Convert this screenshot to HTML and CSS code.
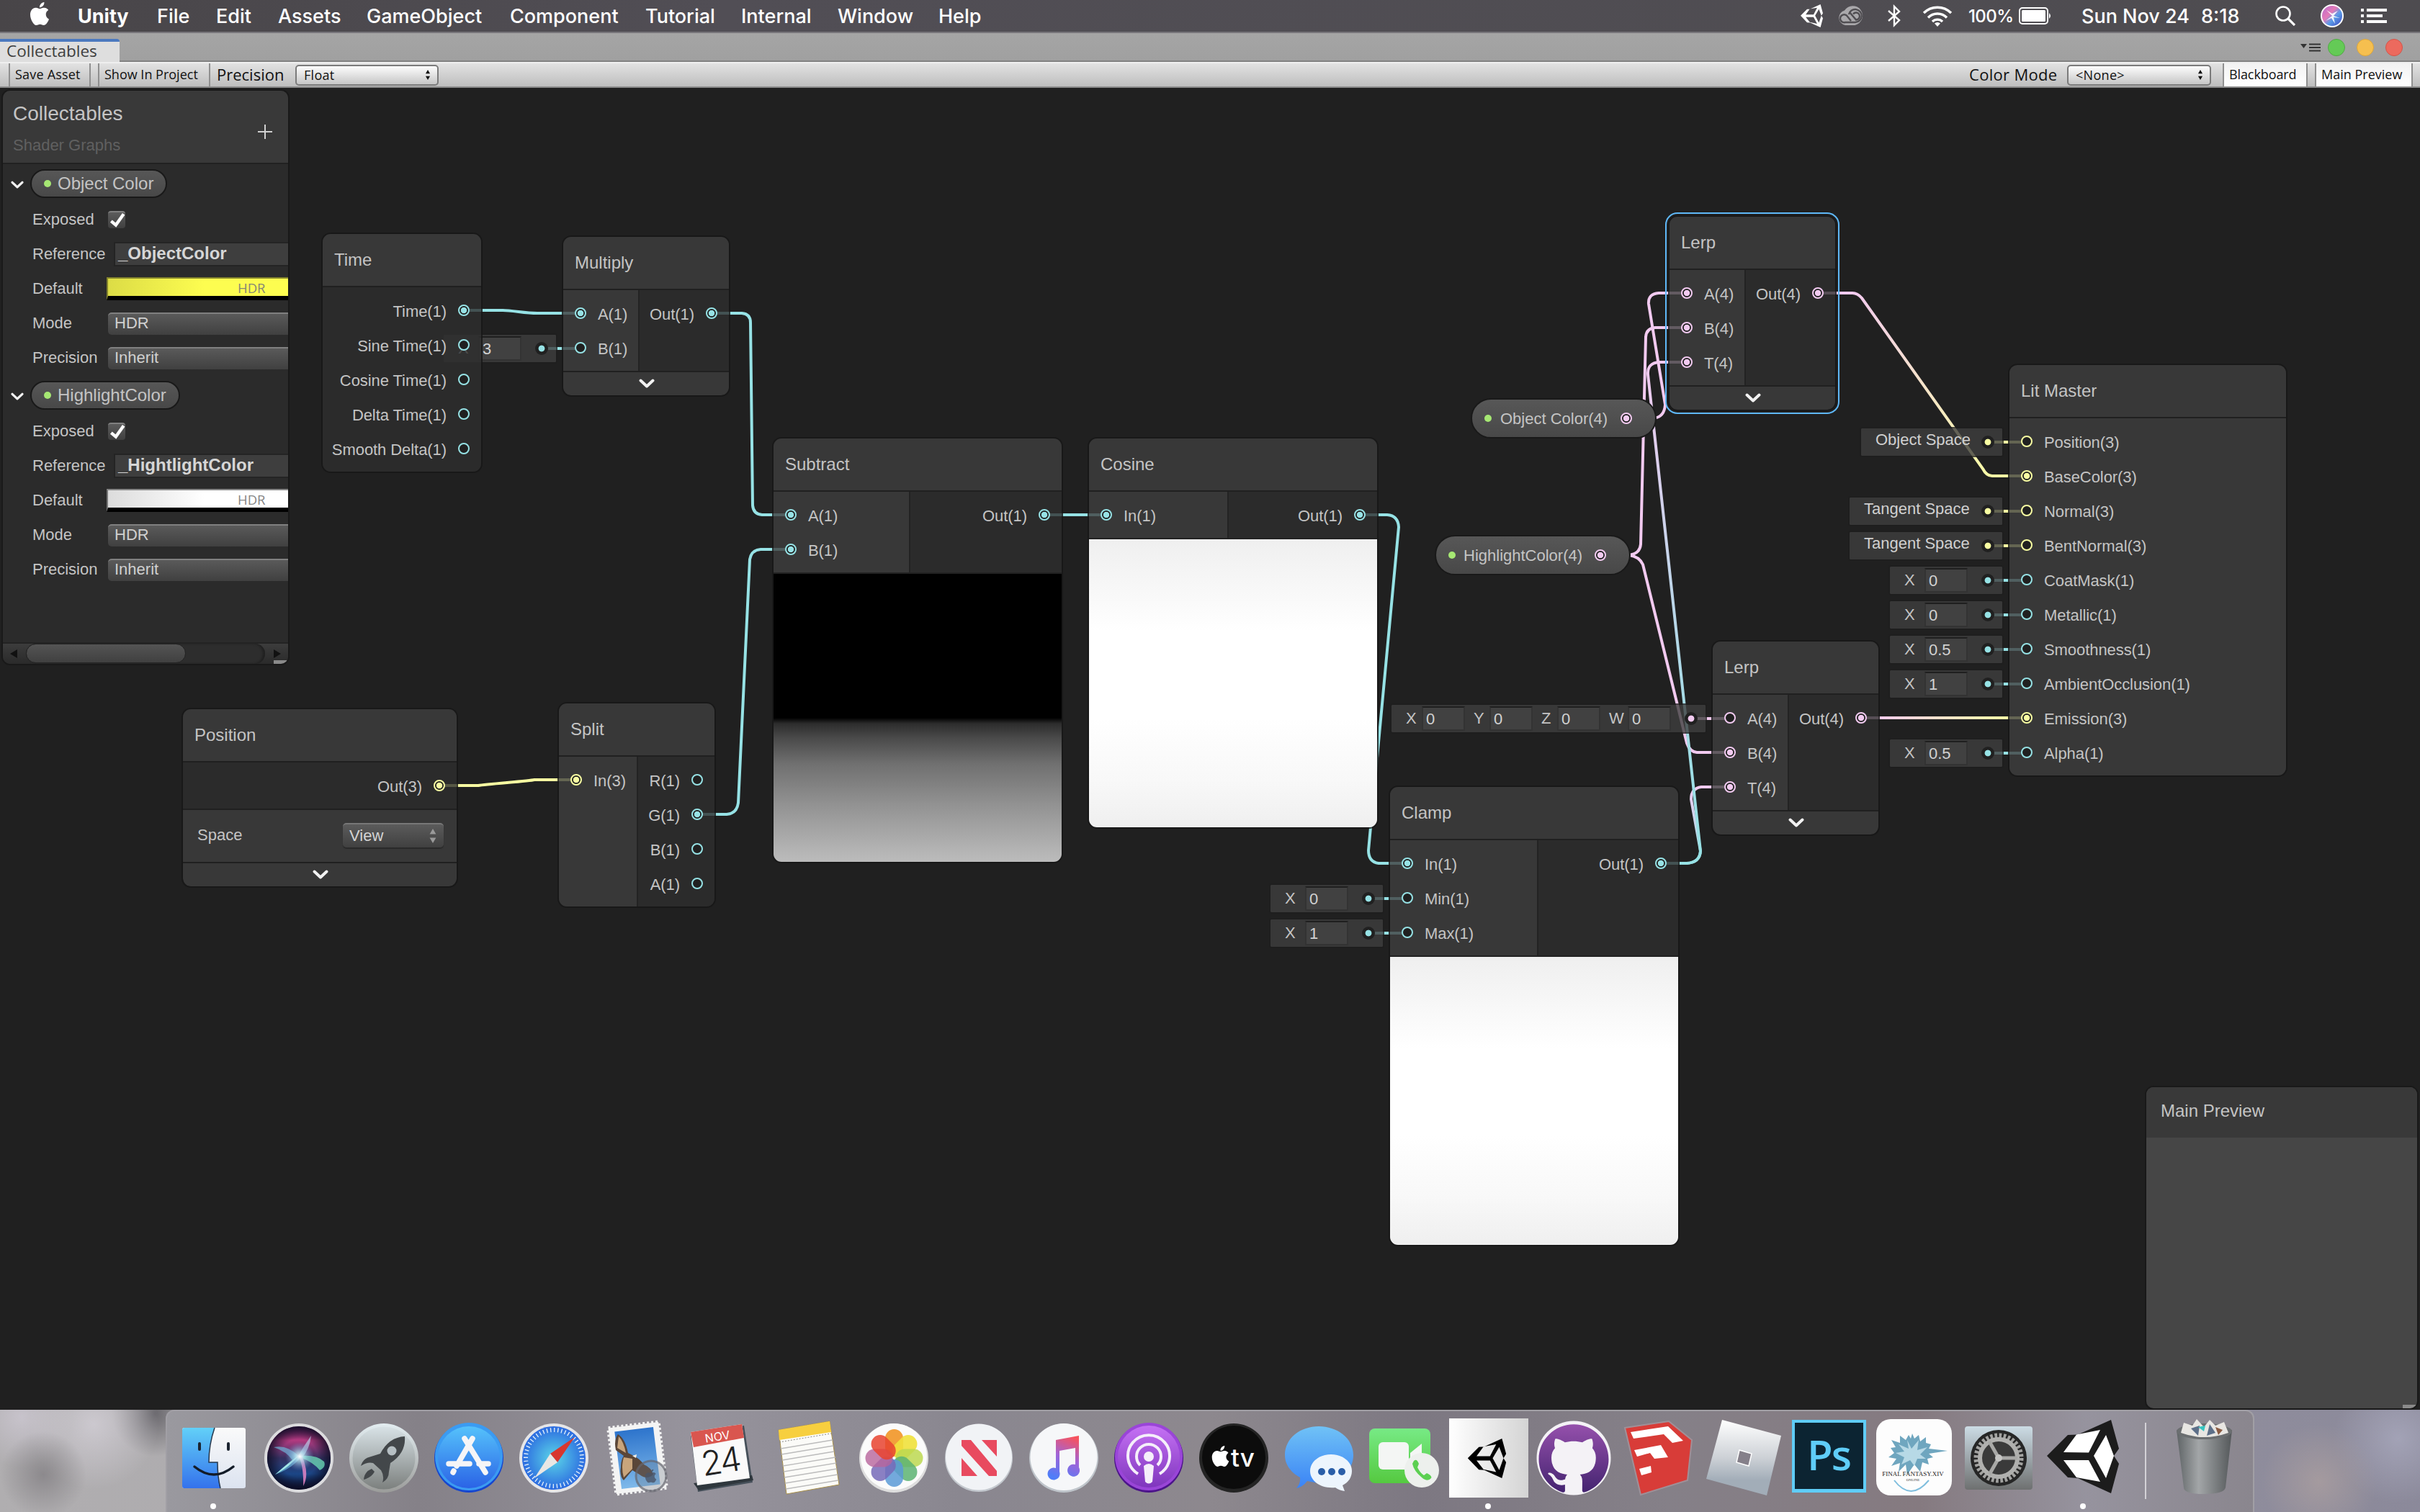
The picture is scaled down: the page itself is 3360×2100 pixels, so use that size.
FILE: index.html
```html
<!DOCTYPE html>
<html lang="en">
<head>
<meta charset="utf-8">
<title>Collectables - Shader Graph</title>
<link rel="stylesheet" href="styles.css">
</head>
<body>
<svg class="defs" width="0" height="0">
  <symbol id="unity" viewBox="0 0 100 103"><path fill-rule="evenodd" d="M0 51 29 22 43 21 89 0 100 40 93 51 100 62 89 103 43 82 29 81ZM23 46H58L74 15 41 21ZM23 57 41 80 74 87 58 57ZM65 51 82 82 93 51 82 22Z"/></symbol>
  <symbol id="apple" viewBox="0 0 24 24"><path d="M12.152 6.896c-.948 0-2.415-1.078-3.96-1.04-2.04.027-3.91 1.183-4.961 3.014-2.117 3.675-.546 9.103 1.519 12.09 1.013 1.454 2.208 3.09 3.792 3.039 1.52-.065 2.09-.987 3.935-.987 1.831 0 2.35.987 3.96.948 1.637-.026 2.676-1.48 3.676-2.948 1.156-1.688 1.636-3.325 1.662-3.415-.039-.013-3.182-1.221-3.22-4.857-.026-3.04 2.48-4.494 2.597-4.559-1.429-2.09-3.623-2.324-4.39-2.376-2-.156-3.675 1.09-4.61 1.09zM15.53 3.83c.843-1.012 1.4-2.427 1.245-3.83-1.207.052-2.662.805-3.532 1.818-.78.896-1.454 2.338-1.273 3.714 1.338.104 2.715-.688 3.559-1.701"/></symbol>
  <symbol id="chev" viewBox="0 0 22 14"><path d="M2.500 2.500 11 10.500 19.500 2.500" fill="none" stroke="#f2f2f2" stroke-width="4" stroke-linecap="round" stroke-linejoin="round"/></symbol>
  <symbol id="updown" viewBox="0 0 8 16"><path d="M4 0 7.500 6H.5ZM4 16 .5 10H7.500Z"/></symbol>
</svg>

<header class="menubar">
  <svg class="apple" fill="#fff"><use href="#apple"/></svg>
  <nav class="menus"><b>Unity</b><span>File</span><span>Edit</span><span>Assets</span><span>GameObject</span><span>Component</span><span>Tutorial</span><span>Internal</span><span>Window</span><span>Help</span></nav>
  <div class="status">
    <svg class="st-unity" fill="#fff"><use href="#unity"/></svg>
    <svg class="st-cc" viewBox="0 0 38 28"><path d="M11 27a10.500 10.500 0 0 1-1-20.500A13.600 13.600 0 1 1 24.500 27Z" fill="#a9a8ab"/><g fill="none" stroke="#504e52" stroke-width="2.400"><path d="M19 21 13 13.500a5.500 5.500 0 1 0-2 9.500H25a9 9 0 1 0-9-11"/><path d="M17 9 26 19.500a5 5 0 1 0-4-8"/></g></svg>
    <svg class="st-bt" viewBox="0 0 20 32"><path d="M2 9 17 22 10 29V3l7 7L2 23" fill="none" stroke="#fff" stroke-width="2.400"/></svg>
    <svg class="st-wifi" viewBox="0 0 42 30"><g fill="none" stroke="#fff" stroke-width="3.400"><path d="M2 11a27 27 0 0 1 38 0M8 17.500a18 18 0 0 1 26 0M14 23a10 10 0 0 1 14 0"/></g><path d="M21 30l-4-4.500a6 6 0 0 1 8 0Z" fill="#fff"/></svg>
    <span class="st-pct">100%</span>
    <svg class="st-bat" viewBox="0 0 46 24"><rect x="1" y="1" width="39" height="22" rx="4" fill="none" stroke="#fff" stroke-width="2"/><rect x="4" y="4" width="33" height="16" rx="1.500" fill="#fff"/><path d="M42 8q4 4 0 8Z" fill="#fff"/></svg>
    <span class="st-date">Sun Nov 24</span><span class="st-time">8:18</span>
    <svg class="st-search" viewBox="0 0 28 28"><circle cx="11" cy="11" r="9.500" fill="none" stroke="#fff" stroke-width="2.600"/><path d="M18 18 27 27" stroke="#fff" stroke-width="3.200"/></svg>
    <svg class="st-siri" viewBox="0 0 32 32"><defs><linearGradient id="sm" x1="0" y1="0" x2="1" y2="1"><stop offset="0" stop-color="#b36bd0"/><stop offset=".4" stop-color="#e47ab8"/><stop offset=".6" stop-color="#5a9be8"/><stop offset="1" stop-color="#3d3fbd"/></linearGradient></defs><circle cx="16" cy="16" r="15" fill="url(#sm)" stroke="#fff" stroke-width="2"/><path d="M16 16 8 8 16 13 24 9 18 16 27 19 18 18 20 27 15 19 7 23Z" fill="#fff" opacity=".9"/></svg>
    <svg class="st-list" viewBox="0 0 36 20"><path d="M0 2H4M0 10H4M0 18H4M8 2H36M8 10H30M8 18H36" stroke="#fff" stroke-width="4"/></svg>
  </div>
</header>

<div class="tabstrip">
  <div class="tab">Collectables</div>
  <div class="winctl">
    <svg viewBox="0 0 28 12"><path d="M0 1H9L4.500 7Z" fill="#333"/><path d="M12 1.500H28M12 6H28M12 10.500H28" stroke="#333" stroke-width="2"/></svg>
    <i class="g"></i><i class="y"></i><i class="r"></i>
  </div>
</div>

<div class="toolbar">
  <div class="tbtn save">Save Asset</div>
  <div class="tbtn show">Show In Project</div>
  <span class="tlabel precision">Precision</span>
  <div class="tselect float"><span>Float</span><svg><use href="#updown"/></svg></div>
  <span class="tlabel cmode">Color Mode</span>
  <div class="tselect none"><span>&lt;None&gt;</span><svg><use href="#updown"/></svg></div>
  <div class="tbtn lit bb">Blackboard</div>
  <div class="tbtn lit mp">Main Preview</div>
</div>

<main class="canvas">
  <svg class="edges" viewBox="0 122 3360 1836" fill="none" stroke-width="4">
    <defs>
      <linearGradient id="e1" gradientUnits="userSpaceOnUse" x1="2360" y1="1199" x2="2290" y2="503"><stop offset="0" stop-color="#96e2e5"/><stop offset=".3" stop-color="#a4dce6"/><stop offset="1" stop-color="#f2caf0"/></linearGradient>
      <linearGradient id="e2" gradientUnits="userSpaceOnUse" x1="2360" y1="1199" x2="2360" y2="1093"><stop offset="0" stop-color="#96e2e5"/><stop offset="1" stop-color="#f2caf0"/></linearGradient>
      <linearGradient id="e3" gradientUnits="userSpaceOnUse" x1="2560" y1="407" x2="2790" y2="661"><stop offset="0" stop-color="#f2caf0"/><stop offset="1" stop-color="#f8fda2"/></linearGradient>
      <linearGradient id="e4" gradientUnits="userSpaceOnUse" x1="2600" y1="0" x2="2800" y2="0"><stop offset="0" stop-color="#f2caf0"/><stop offset="1" stop-color="#f8fda2"/></linearGradient>
    </defs>
    <g stroke="#96e2e5">
      <path d="M644 431H698Q704 431 720 433T746 435H806"/>
      <path d="M988 435H1030Q1042 436 1042 448L1045 702Q1046 714 1058 715H1098"/>
      <path d="M968 1131H1009Q1023 1130 1025 1115L1041 777Q1043 764 1056 763H1098"/>
      <path d="M1450 715H1536"/>
      <path d="M1888 715H1926Q1941 716 1942 732L1900 1181Q1900 1197 1914 1199H1954"/>
      <path d="M752 484H806M1900 1248H1954M1900 1296H1954M2760 806H2814M2760 854H2814M2760 902H2814M2760 950H2814M2760 1046H2814"/>
    </g>
    <path stroke="#f8fda2" d="M610 1091H664Q670 1090 704 1087T742 1083H800M2760 614H2814M2760 710H2814M2760 758H2814"/>
    <g stroke="#f2caf0">
      <path d="M2258 581H2296Q2311 579 2312 562L2289 422Q2288 408 2303 407H2342"/>
      <path d="M2222 771H2262Q2277 769 2278 756L2285 468Q2286 456 2298 455H2342"/>
      <path d="M2222 771H2262Q2276 773 2281 784L2342 1032Q2346 1044 2356 1045H2402"/>
      <path d="M2348 998H2402"/>
    </g>
    <path stroke="url(#e2)" d="M2306 1199H2342Q2360 1198 2361 1182L2348 1110Q2348 1095 2362 1093H2402"/>
    <path stroke="url(#e1)" d="M2306 1199H2342Q2360 1198 2361 1182L2288 520Q2287 504 2304 503H2342"/>
    <path stroke="url(#e3)" d="M2524 407H2572Q2579 407 2585 414L2753 651Q2758 661 2766 661H2814"/>
    <path stroke="url(#e4)" d="M2584 997H2814.010V997.010"/>
  </svg>

  <div class="slot" style="left:616px;top:343px"><b>X</b><em>3</em><i class="dot c"></i></div>
  <div class="slot" style="left:1764px;top:1107px"><b>X</b><em>0</em><i class="dot c"></i></div>
  <div class="slot" style="left:1764px;top:1155px"><b>X</b><em>1</em><i class="dot c"></i></div>
  <div class="slot vec" style="left:1932px;top:857px"><b>X</b><em>0</em><b>Y</b><em>0</em><b>Z</b><em>0</em><b class="w">W</b><em>0</em><i class="dot p"></i></div>
  <div class="slot object" style="left:2584px;top:473px"><u>Object Space</u><i class="dot y"></i></div>
  <div class="slot tangent" style="left:2568px;top:569px"><u>Tangent Space</u><i class="dot y"></i></div>
  <div class="slot tangent" style="left:2568px;top:617px"><u>Tangent Space</u><i class="dot y"></i></div>
  <div class="slot" style="left:2624px;top:665px"><b>X</b><em>0</em><i class="dot c"></i></div>
  <div class="slot" style="left:2624px;top:713px"><b>X</b><em>0</em><i class="dot c"></i></div>
  <div class="slot" style="left:2624px;top:761px"><b>X</b><em>0.5</em><i class="dot c"></i></div>
  <div class="slot" style="left:2624px;top:809px"><b>X</b><em>1</em><i class="dot c"></i></div>
  <div class="slot" style="left:2624px;top:905px"><b>X</b><em>0.5</em><i class="dot c"></i></div>

  <section class="node time">
    <h2>Time</h2>
    <div class="ports"><div class="out">
      <p>Time(1)<i class="port c on"></i></p><p>Sine Time(1)<i class="port c"></i></p><p>Cosine Time(1)<i class="port c"></i></p><p>Delta Time(1)<i class="port c"></i></p><p>Smooth Delta(1)<i class="port c"></i></p>
    </div></div>
  </section>

  <section class="node multiply">
    <h2>Multiply</h2>
    <div class="ports">
      <div class="in"><p><i class="port c on"></i>A(1)</p><p><i class="port c"></i>B(1)</p></div>
      <div class="out"><p>Out(1)<i class="port c on"></i></p></div>
    </div>
    <div class="foot"><svg><use href="#chev"/></svg></div>
  </section>

  <section class="node position">
    <h2>Position</h2>
    <div class="ports"><div class="out"><p>Out(3)<i class="port y on"></i></p></div></div>
    <div class="control"><span>Space</span><div class="dselect"><span>View</span><svg><use href="#updown"/></svg></div></div>
    <div class="foot"><svg><use href="#chev"/></svg></div>
  </section>

  <section class="node split">
    <h2>Split</h2>
    <div class="ports">
      <div class="in"><p><i class="port y on"></i>In(3)</p></div>
      <div class="out"><p>R(1)<i class="port c"></i></p><p>G(1)<i class="port c on"></i></p><p>B(1)<i class="port c"></i></p><p>A(1)<i class="port c"></i></p></div>
    </div>
  </section>

  <section class="node subtract">
    <h2>Subtract</h2>
    <div class="ports">
      <div class="in"><p><i class="port c on"></i>A(1)</p><p><i class="port c on"></i>B(1)</p></div>
      <div class="out"><p>Out(1)<i class="port c on"></i></p></div>
    </div>
    <div class="preview ramp"></div>
  </section>

  <section class="node cosine">
    <h2>Cosine</h2>
    <div class="ports">
      <div class="in"><p><i class="port c on"></i>In(1)</p></div>
      <div class="out"><p>Out(1)<i class="port c on"></i></p></div>
    </div>
    <div class="preview white"></div>
  </section>

  <section class="node clamp">
    <h2>Clamp</h2>
    <div class="ports">
      <div class="in"><p><i class="port c on"></i>In(1)</p><p><i class="port c"></i>Min(1)</p><p><i class="port c"></i>Max(1)</p></div>
      <div class="out"><p>Out(1)<i class="port c on"></i></p></div>
    </div>
    <div class="preview white"></div>
  </section>

  <div class="pill-node objcolor"><i class="bead"></i><span>Object Color(4)</span><i class="port p on"></i></div>
  <div class="pill-node hicolor"><i class="bead"></i><span>HighlightColor(4)</span><i class="port p on"></i></div>

  <section class="node lerp lerp-a selected">
    <h2>Lerp</h2>
    <div class="ports">
      <div class="in"><p><i class="port p on"></i>A(4)</p><p><i class="port p on"></i>B(4)</p><p><i class="port p on"></i>T(4)</p></div>
      <div class="out"><p>Out(4)<i class="port p on"></i></p></div>
    </div>
    <div class="foot"><svg><use href="#chev"/></svg></div>
  </section>

  <section class="node lerp lerp-b">
    <h2>Lerp</h2>
    <div class="ports">
      <div class="in"><p><i class="port p"></i>A(4)</p><p><i class="port p on"></i>B(4)</p><p><i class="port p on"></i>T(4)</p></div>
      <div class="out"><p>Out(4)<i class="port p on"></i></p></div>
    </div>
    <div class="foot"><svg><use href="#chev"/></svg></div>
  </section>

  <section class="node master">
    <h2>Lit Master</h2>
    <div class="ports"><div class="in">
      <p><i class="port y"></i>Position(3)</p><p><i class="port y on"></i>BaseColor(3)</p><p><i class="port y"></i>Normal(3)</p><p><i class="port y"></i>BentNormal(3)</p><p><i class="port c"></i>CoatMask(1)</p><p><i class="port c"></i>Metallic(1)</p><p><i class="port c"></i>Smoothness(1)</p><p><i class="port c"></i>AmbientOcclusion(1)</p><p><i class="port y on"></i>Emission(3)</p><p><i class="port c"></i>Alpha(1)</p>
    </div></div>
  </section>

  <aside class="blackboard">
    <div class="bb-head"><div><h1>Collectables</h1><h3>Shader Graphs</h3></div><svg class="plus" viewBox="0 0 20 20"><path d="M10 0V20M0 10H20" stroke="#d0d0d0" stroke-width="2"/></svg></div>
    <div class="prop">
      <div class="prop-title"><svg><use href="#chev"/></svg><span class="pill"><i class="bead"></i>Object Color</span></div>
      <div class="row"><label>Exposed</label><div class="check"><svg viewBox="0 0 24 20"><path d="M4 11 10 16 20 2" fill="none" stroke="#fff" stroke-width="4"/></svg></div></div>
      <div class="row"><label>Reference</label><div class="textfield">_ObjectColor</div></div>
      <div class="row"><label>Default</label><div class="swatch yellow">HDR</div></div>
      <div class="row"><label>Mode</label><div class="bselect">HDR</div></div>
      <div class="row"><label>Precision</label><div class="bselect">Inherit</div></div>
    </div>
    <div class="prop">
      <div class="prop-title"><svg><use href="#chev"/></svg><span class="pill"><i class="bead"></i>HighlightColor</span></div>
      <div class="row"><label>Exposed</label><div class="check"><svg viewBox="0 0 24 20"><path d="M4 11 10 16 20 2" fill="none" stroke="#fff" stroke-width="4"/></svg></div></div>
      <div class="row"><label>Reference</label><div class="textfield">_HightlightColor</div></div>
      <div class="row"><label>Default</label><div class="swatch pale">HDR</div></div>
      <div class="row"><label>Mode</label><div class="bselect">HDR</div></div>
      <div class="row"><label>Precision</label><div class="bselect">Inherit</div></div>
    </div>
    <div class="hscroll"><svg viewBox="0 0 10 12"><path d="M10 0V12L0 6Z" fill="#111"/></svg><div class="track"><div class="thumb"></div></div><svg viewBox="0 0 10 12"><path d="M0 0V12L10 6Z" fill="#111"/></svg><i class="grip"></i></div>
  </aside>

  <aside class="main-preview"><h2>Main Preview</h2><i class="grip"></i></aside>
</main>

<footer class="desktop">
  <div class="dock">
    <svg viewBox="0 0 118 142"><defs><linearGradient id="f1" x2="0" y2="1"><stop offset="0" stop-color="#62d0f8"/><stop offset="1" stop-color="#3472ec"/></linearGradient><linearGradient id="f2" x2="0" y2="1"><stop offset="0" stop-color="#fafafa"/><stop offset="1" stop-color="#dce3f0"/></linearGradient></defs><rect x="15" y="25" width="88" height="84" rx="3" fill="url(#f2)"/><path d="M18 25H60Q52 48 52 73H64Q64 93 68 109H18q-3 0-3-3V28q0-3 3-3Z" fill="url(#f1)"/><path d="M60 25Q52 48 52 73H64Q64 93 68 109" fill="none" stroke="#26384d" stroke-width="1.500"/><path d="M39 47V55M79 47V55" stroke="#1b2430" stroke-width="4" stroke-linecap="round"/><path d="M32 79Q59 101 86 79" fill="none" stroke="#131c28" stroke-width="3.500" stroke-linecap="round"/><circle cx="58" cy="134" r="4" fill="#fff"/></svg>
    <svg viewBox="0 0 118 142"><defs><linearGradient id="s1" x1=".5" x2=".5" y2="1"><stop offset="0" stop-color="#4a1a50"/><stop offset=".22" stop-color="#b23a80"/><stop offset=".5" stop-color="#34305f"/><stop offset=".75" stop-color="#1b4686"/><stop offset="1" stop-color="#0d0f2c"/></linearGradient><radialGradient id="s2"><stop offset="0" stop-color="#fff"/><stop offset=".35" stop-color="#b5e6f4" stop-opacity=".7"/><stop offset="1" stop-color="#68c" stop-opacity="0"/></radialGradient><radialGradient id="s3"><stop offset=".6" stop-color="#0b0b22" stop-opacity="0"/><stop offset="1" stop-color="#0b0b22" stop-opacity=".8"/></radialGradient></defs><circle cx="59" cy="67" r="48" fill="#dcdcde"/><circle cx="59" cy="67" r="44" fill="url(#s1)"/><circle cx="59" cy="67" r="44" fill="url(#s3)"/><path d="M59 64Q42 48 24 52 42 58 50 70L26 90Q48 82 60 68Z" fill="#6fc8ea" opacity=".6"/><path d="M60 66Q78 72 88 84 97 80 94 72 84 62 60 64Z" fill="#6de0b8" opacity=".75"/><path d="M59 64Q66 82 65 106 74 90 64 66Z" fill="#f08acb" opacity=".8"/><path d="M58 64Q66 50 76 36 74 54 64 66Z" fill="#bcd6ee" opacity=".65"/><path d="M26 90Q48 78 58 64 46 72 26 90Z" fill="#b8fff4" opacity=".8"/><circle cx="60" cy="65" r="20" fill="url(#s2)"/></svg>
    <svg viewBox="0 0 118 142"><defs><linearGradient id="l1" x2="0" y2="1"><stop offset="0" stop-color="#d8e2e6"/><stop offset="1" stop-color="#7c807e"/></linearGradient><linearGradient id="l2" x2="0" y2="1"><stop offset="0" stop-color="#e3edf1"/><stop offset="1" stop-color="#9b9c9a"/></linearGradient></defs><circle cx="59" cy="67" r="48" fill="url(#l2)"/><circle cx="59" cy="67" r="43.500" fill="url(#l1)"/><path d="M88 37Q66 38 54 61L38 66Q30 68 27 78 36 72 44 74L55 84Q60 92 57 101 66 96 66 86L68 74Q90 60 88 37ZM42 82Q32 86 31 97 42 94 46 86Z" fill="#43474a"/><circle cx="70" cy="57" r="6.500" fill="#b6bfc3"/></svg>
    <svg viewBox="0 0 118 142"><defs><linearGradient id="a1" x2="0" y2="1"><stop offset="0" stop-color="#55c2fb"/><stop offset="1" stop-color="#2a63e6"/></linearGradient></defs><circle cx="59" cy="67" r="48" fill="#1646cf"/><circle cx="59" cy="65" r="47" fill="#3b9bf2"/><circle cx="59" cy="66" r="43" fill="url(#a1)"/><g stroke="#f5f5f7" stroke-width="7.500" stroke-linecap="round"><path d="M64 40 42 78M53 40 82 87M31 75H60M73 75H86M38 85 37 87"/></g></svg>
    <svg viewBox="0 0 118 142"><defs><radialGradient id="sf"><stop offset="0" stop-color="#5bd6e8"/><stop offset="1" stop-color="#2c6be0"/></radialGradient></defs><circle cx="59" cy="67" r="48" fill="#e6e6e8"/><circle cx="59" cy="67" r="44" fill="url(#sf)"/><circle cx="59" cy="67" r="39" fill="none" stroke="#e8f3fb" stroke-width="6" stroke-dasharray="1.300 3.800"/><path d="M88 38 54 61 64 73Z" fill="#d8372f"/><path d="M32 95 54 61 64 73Z" fill="#e9e7e4"/></svg>
    <svg viewBox="0 0 118 142"><defs><linearGradient id="m1" x2="0" y2="1"><stop offset="0" stop-color="#2d74cc"/><stop offset="1" stop-color="#7fb9ea"/></linearGradient></defs><g transform="rotate(-7 57 67)"><rect x="22" y="21" width="70" height="92" fill="#f4f4f4" stroke="#f4f4f4" stroke-width="5" stroke-dasharray="3 3"/><rect x="30" y="27" width="54" height="80" fill="url(#m1)"/></g><path d="M30 34Q40 40 44 60L52 64Q60 68 66 76 76 80 79 90 70 98 60 90L50 84 38 98Q32 92 34 80 34 70 38 64L27 56Q24 42 30 34Z" fill="#5a4638"/><path d="M31 37Q38 44 41 60L29 53ZM38 66 50 68 50 82 38 94Q34 80 38 66Z" fill="#c9a57c"/><path d="M50 64 56 62 55 67Z" fill="#f2efe8"/><circle cx="76" cy="92" r="21" fill="#6a7480" fill-opacity=".3" stroke="#65656d" stroke-width="3" stroke-opacity=".7"/><svg x="66" y="82" width="19" height="20" viewBox="0 0 24 24" fill="#4a5568" opacity=".8"><use href="#apple"/></svg></svg>
    <svg viewBox="0 0 118 142"><path d="M13 36 87 22 99 101 23 114Z" fill="#46505a"/><path d="M17 102 98 91 100 98 24 112Z" fill="#2f373d"/><path d="M13 31 84 20 95 95 22 105Z" fill="#fafafa"/><path d="M13 31 84 20 87 39 17 52Z" fill="#d9564f"/><text x="51" y="43" class="cal-m" transform="rotate(-9 51 43)">NOV</text><text x="57" y="88" class="cal-d" transform="rotate(-9 57 88)">24</text></svg>
    <svg viewBox="0 0 118 142"><path d="M17 28 88 16 101 104 28 117Z" fill="#fbfbf8" stroke="#a9904a" stroke-width="1"/><path d="M17 28 88 16 90 31 18 42Z" fill="#f7cf3f"/><path d="M18 45 90 33" stroke="#888" stroke-dasharray="2 2"/><path d="M20 54 92 42M21 62 93 50M22 70 94 58M23 78 96 66M24 86 97 74M25 94 98 82M26 102 99 90M27 110 100 98" stroke="#bcbcbc" stroke-width="1.300"/></svg>
    <svg viewBox="0 0 118 142"><circle cx="59" cy="67" r="48" fill="#dedede"/><circle cx="59" cy="65" r="46" fill="#fbfbfb"/><rect x="47" y="27" width="25" height="38" rx="12.500" fill="#f2a03c"/><rect x="47" y="27" width="25" height="38" rx="12.500" fill="#efe13c" fill-opacity=".9" transform="rotate(45 59.500 67)"/><rect x="47" y="27" width="25" height="38" rx="12.500" fill="#bcd850" fill-opacity=".85" transform="rotate(90 59.500 67)"/><rect x="47" y="27" width="25" height="38" rx="12.500" fill="#5cb372" fill-opacity=".85" transform="rotate(135 59.500 67)"/><rect x="47" y="27" width="25" height="38" rx="12.500" fill="#5a9ad6" fill-opacity=".85" transform="rotate(180 59.500 67)"/><rect x="47" y="27" width="25" height="38" rx="12.500" fill="#766ab8" fill-opacity=".85" transform="rotate(225 59.500 67)"/><rect x="47" y="27" width="25" height="38" rx="12.500" fill="#b8649c" fill-opacity=".8" transform="rotate(270 59.500 67)"/><rect x="47" y="27" width="25" height="38" rx="12.500" fill="#e8432f" fill-opacity=".85" transform="rotate(315 59.500 67)"/></svg>
    <svg viewBox="0 0 118 142"><circle cx="59" cy="67" r="47" fill="#c3c8ce"/><circle cx="59" cy="65.500" r="46" fill="#f1f3f6"/><path d="M35 42H48L84 85V92H73L35 50ZM63 42H84V65ZM35 67 57 92H35Z" fill="#e84a5f"/></svg>
    <svg viewBox="0 0 118 142"><defs><linearGradient id="mu" x1=".7" y1="0" x2=".4" y2="1"><stop offset="0" stop-color="#f7535e"/><stop offset=".5" stop-color="#a064d8"/><stop offset="1" stop-color="#4f7df8"/></linearGradient></defs><circle cx="59" cy="67" r="48" fill="#bfc5cb"/><circle cx="59" cy="65.500" r="46.500" fill="#f6f7f9"/><path d="M48 42 80 36V80A8.500 8.500 0 1 1 75 76V53L53 57V86A8.500 8.500 0 1 1 48 81Z" fill="url(#mu)"/></svg>
    <svg viewBox="0 0 118 142"><defs><linearGradient id="po" x2="0" y2="1"><stop offset="0" stop-color="#c571f4"/><stop offset="1" stop-color="#7f36bd"/></linearGradient></defs><circle cx="59" cy="67" r="48" fill="#4c148a"/><circle cx="59" cy="65" r="47" fill="#9a45d8"/><circle cx="59" cy="65" r="43" fill="url(#po)"/><g fill="none" stroke="#f5effa" stroke-width="4"><path d="M44 89A29 29 0 1 1 74 89M47 77A17 17 0 1 1 71 77"/></g><circle cx="59" cy="65" r="7" fill="#f5effa"/><path d="M52 78q7-6 14 0l-2 22q-5 5-10 0Z" fill="#f5effa"/></svg>
    <svg viewBox="0 0 118 142"><circle cx="59" cy="67" r="48" fill="#242424"/><circle cx="59" cy="66" r="44" fill="#0c0c0c"/><svg x="26" y="49" width="29" height="31" viewBox="0 0 24 24" fill="#fff"><use href="#apple"/></svg><text x="55" y="79" class="tv">tv</text></svg>
    <svg viewBox="0 0 118 142"><defs><linearGradient id="me" x2="0" y2="1"><stop offset="0" stop-color="#70c2f6"/><stop offset="1" stop-color="#3a83f5"/></linearGradient></defs><path d="M59 23C84 23 107 39 107 63S84 103 59 102L43 99Q37 107 28 109 34 102 33 94C20 87 12 76 12 63 12 39 34 23 59 23Z" fill="url(#me)"/><path d="M76 62C92 62 105 72 105 85 105 94 100 101 92 105L95 113Q87 112 82 108C62 110 47 99 47 85 47 72 60 62 76 62Z" fill="#edf5fd"/><g fill="#2a5ea8"><circle cx="63" cy="86" r="5"/><circle cx="77" cy="86" r="5"/><circle cx="91" cy="86" r="5"/></g></svg>
    <svg viewBox="0 0 118 142"><defs><linearGradient id="fa" x2="0" y2="1"><stop offset="0" stop-color="#77ea85"/><stop offset="1" stop-color="#55c940"/></linearGradient></defs><rect x="11" y="26" width="85" height="76" rx="8" fill="url(#fa)"/><rect x="24" y="45" width="42" height="38" rx="6" fill="#f4f6f4"/><path d="M68 60 84 47V80L68 68Z" fill="#f4f6f4"/><circle cx="84" cy="84" r="24" fill="#edf0ed"/><path d="M73 71q4-4 7 4l-2 5q4 8 9 11l4-3q8 4 6 7-5 6-13-1-11-9-13-19Z" fill="#5cd052"/></svg>
    <svg viewBox="0 0 118 142"><defs><linearGradient id="hu"><stop offset="0" stop-color="#fff"/><stop offset="1" stop-color="#d4d4d4"/></linearGradient></defs><rect x="4" y="12" width="110" height="110" fill="url(#hu)"/><svg x="29" y="40" width="55" height="55" viewBox="0 0 100 103" fill="#000"><use href="#unity"/></svg><circle cx="58" cy="134" r="4" fill="#fff"/></svg>
    <svg viewBox="0 0 118 142"><defs><linearGradient id="gh" x2="0" y2="1"><stop offset="0" stop-color="#9550ac"/><stop offset="1" stop-color="#442470"/></linearGradient></defs><circle cx="59" cy="67" r="51.500" fill="#f4f2f6"/><g transform="translate(10.500 19) scale(4.040)"><path fill="url(#gh)" d="M12 .297c-6.630 0-12 5.373-12 12 0 5.303 3.438 9.800 8.205 11.385.6.113.82-.258.82-.577 0-.285-.01-1.040-.015-2.040-3.338.724-4.042-1.610-4.042-1.610C4.422 18.070 3.633 17.700 3.633 17.700c-1.087-.744.084-.729.084-.729 1.205.084 1.838 1.236 1.838 1.236 1.070 1.835 2.809 1.305 3.495.998.108-.776.417-1.305.76-1.605-2.665-.3-5.466-1.332-5.466-5.930 0-1.310.465-2.380 1.235-3.220-.135-.303-.54-1.523.105-3.176 0 0 1.005-.322 3.300 1.230.96-.267 1.980-.399 3-.405 1.020.006 2.040.138 3 .405 2.280-1.552 3.285-1.230 3.285-1.230.645 1.653.24 2.873.12 3.176.765.84 1.230 1.910 1.230 3.220 0 4.610-2.805 5.625-5.475 5.920.42.36.81 1.096.81 2.220 0 1.606-.015 2.896-.015 3.286 0 .315.21.69.825.57C20.565 22.092 24 17.592 24 12.297c0-6.627-5.373-12-12-12"/></g></svg>
    <svg viewBox="0 0 118 142"><path d="M12 25 73 16 105 42 99 98 34 118Z" fill="#d83c38" stroke="#a09098" stroke-width="2"/><path d="M20 31 72 23 93 43 78 46 66 34 24 40ZM25 56 62 49 72 66 53 68 47 60 29 65ZM32 82 48 78 49 87 35 91Z" fill="#fff"/></svg>
    <svg viewBox="0 0 118 142"><defs><linearGradient id="ro" x2="0" y2="1"><stop offset="0" stop-color="#fff"/><stop offset=".5" stop-color="#cdd1d6"/><stop offset=".8" stop-color="#a2adb8"/></linearGradient></defs><path d="M29 14 111 36 91 119 7 96Z" fill="url(#ro)"/><path d="M53 56 70 61 66 78 49 73Z" fill="#85808a" stroke="#fff" stroke-width="1.500"/></svg>
    <svg viewBox="0 0 118 142"><rect x="8" y="14" width="103" height="101" fill="#5fcdf8"/><rect x="12" y="18" width="95" height="92" fill="#0c2432"/><text x="59" y="84" class="ps">Ps</text></svg>
    <svg viewBox="0 0 118 142"><rect x="7" y="13" width="105" height="106" rx="20" fill="#fdfdfd"/><path d="M57 33 60 40 66 35 68 44 76 38 76 46 83 48 80 54 106 57 80 61 86 66 78 68 80 76 71 73 68 86 60 76 50 90 48 76 38 86 40 74 28 78 35 68 24 66 32 60 27 53 34 52 28 42 40 46 40 36 48 42 52 35 55 40Z" fill="#6fa6bf"/><path d="M50 42 56 54 66 42 64 56 78 52 68 62 76 68 64 68 60 78 54 70 42 76 46 66 34 60 46 58 38 48 52 54Z" fill="#b7d9e6"/><path d="M32 98Q55 128 80 98" fill="none" stroke="#7fbede" stroke-width="2"/><text x="58" y="92" class="ff">FINAL FANTASY.XIV</text><text x="58" y="99" class="ff2">ONLINE</text></svg>
    <svg viewBox="0 0 118 142"><defs><linearGradient id="sp" x2="0" y2="1"><stop offset="0" stop-color="#ccdce5"/><stop offset="1" stop-color="#6e7070"/></linearGradient></defs><rect x="12" y="23" width="94" height="88" rx="4" fill="url(#sp)"/><circle cx="59" cy="67" r="39" fill="#262626"/><circle cx="59" cy="67" r="31" fill="none" stroke="#a2a2a0" stroke-width="7" stroke-dasharray="3.600 2.500"/><circle cx="59" cy="67" r="26" fill="#3a3a3a" stroke="#b0b0ae" stroke-width="6"/><path d="M59 67H85M59 67 46 44M59 67 46 90" stroke="#a8a8a6" stroke-width="5"/><circle cx="59" cy="67" r="5" fill="#c4c4c2"/></svg>
    <svg viewBox="0 0 118 142"><path d="M8 64 37 35 51 34.500 97 14 108 54 101 64 108 75 97 116 51 95 37 94Z" fill="#1c1c1c"/><path d="M31 59 49 34.500 82 28 66 59.500ZM31 70H66L82 100 49 94ZM73 64 90 35 101 64 90 95Z" fill="#fff"/><circle cx="58" cy="134" r="4" fill="#fff"/></svg>
    <i class="sep"></i>
    <svg viewBox="0 0 118 142"><defs><linearGradient id="tr"><stop offset="0" stop-color="#5f6466"/><stop offset=".4" stop-color="#a3a6a8"/><stop offset="1" stop-color="#54585a"/></linearGradient></defs><path d="M20 28Q58 48 97 28L88 108Q86 117 58 117T30 108Z" fill="url(#tr)"/><ellipse cx="58.500" cy="30" rx="38.500" ry="11" fill="#6b6e70"/><path d="M26 32 30 18 42 22 48 13 58 24 66 14 74 22 86 17 92 32Q58 44 26 32Z" fill="#e8e6e2"/><path d="M40 26 52 22 50 36ZM66 20 74 32 62 36Z" fill="#5d6f88"/><path d="M50 24 60 22 58 30Z" fill="#37c4c0"/><path d="M74 24 84 28 78 35Z" fill="#8a5b42"/></svg>
  </div>
</footer>
</body>
</html>
```

FILE: styles.css
```css
* { box-sizing: border-box; }
body {
  margin: 0;
  width: 3360px;
  height: 2100px;
  overflow: hidden;
  display: flex;
  flex-direction: column;
  background: #202020;
  font-family: "Liberation Sans", Arial, sans-serif;
  color: #c4c4c4;
}
h1, h2, h3, p { margin: 0; font-weight: 400; }
b, em, u, i { font-weight: 400; font-style: normal; text-decoration: none; }
.defs { position: absolute; }

/* macOS menu bar */
.menubar {
  height: 46px;
  flex: none;
  display: flex;
  padding-bottom: 2px;
  background: linear-gradient(90deg, #484548, #514e55 30%, #4e4c50);
  border-bottom: 2px solid #77757a;
  color: #fff;
  font: 500 27px/45px Inter, sans-serif;
}
.apple { width: 32px; height: 32px; margin: 3px 0 0 39px; }
.menus {
  margin-left: 37px;
  display: grid;
  grid-template-columns: 110px 82px 86px 123px 199px 188px 133px 134px 140px 100px;
  white-space: nowrap;
}
.menus b { font-weight: 700; }
.status { margin-left: auto; height: 44px; display: flex; align-items: center; padding-right: 46px; }
.status svg { flex: none; }
.status span { white-space: nowrap; }
.st-unity { width: 31px; height: 32px; margin-right: 20px; }
.st-cc { width: 38px; height: 28px; margin-right: 31px; }
.st-bt { width: 20px; height: 32px; margin-right: 29px; }
.st-wifi { width: 42px; height: 30px; margin-right: 22px; }
.st-pct { width: 70px; font-size: 24px; letter-spacing: -.6px; }
.st-bat { width: 46px; height: 24px; margin-right: 41px; }
.st-date { width: 166px; }
.st-time { width: 103px; }
.st-search { width: 28px; height: 28px; margin-right: 35px; }
.st-siri { width: 32px; height: 32px; margin-right: 24px; }
.st-list { width: 36px; height: 20px; }

/* window tab strip */
.tabstrip {
  height: 40px;
  flex: none;
  display: flex;
  justify-content: space-between;
  align-items: flex-start;
  background: linear-gradient(#a5a5a5, #a0a0a0);
  border-bottom: 2px solid #828282;
  font: 22.500px/26px "Open Sans", sans-serif;
}
.tab {
  width: 166px;
  height: 32px;
  margin-top: 8px;
  padding: 0 0 0 9px;
  border-top: 4px solid #4c79bf;
  border-radius: 0 4px 0 0;
  background: #dedede;
  color: #3f3f3f;
}
.winctl { display: flex; align-items: center; margin: 8px 24px 0 0; }
.winctl svg { width: 28px; height: 12px; margin-right: 10px; }
.winctl i { width: 24px; height: 24px; border-radius: 50%; margin-right: 16px; }
.winctl .g { background: #64ca56; border: 1px solid #51a945; }
.winctl .y { background: #f5bf4f; border: 1px solid #dba53a; }
.winctl .r { background: #ec6a5e; border: 1px solid #d35549; margin-right: 0; }

/* Shader Graph toolbar */
.toolbar {
  height: 36px;
  flex: none;
  display: flex;
  align-items: stretch;
  padding: 0 10px 0 12px;
  background: linear-gradient(#e2e2e2, #bebebe);
  border-top: 2px solid #efefef;
  border-bottom: 2px solid #8b8b8b;
  color: #111;
  font: 18px/31px "Open Sans", sans-serif;
  letter-spacing: .3px;
  white-space: nowrap;
}
.tbtn { padding-left: 7px; border: solid #8f8f8f; border-width: 0 2px; }
.save { width: 114px; margin-right: 10px; letter-spacing: .2px; }
.show { width: 156px; letter-spacing: 0; }
.lit { background: linear-gradient(#f2f2f2, #fff); }
.bb { width: 118px; margin-right: 10px; letter-spacing: -.1px; }
.mp { width: 136px; letter-spacing: 0; }
.tlabel { font-size: 22px; letter-spacing: 0; }
.precision { margin-left: 9px; width: 109px; }
.cmode { margin-left: auto; width: 136px; letter-spacing: .3px; }
.tselect {
  display: flex;
  align-items: center;
  justify-content: space-between;
  height: 29px;
  margin-top: 2px;
  padding: 0 9px 1px 10px;
  border: 2px solid #7b7b7b;
  border-radius: 5px;
  background: linear-gradient(#fdfdfd, #c6c6c6);
}
.tselect svg { width: 8px; height: 14px; fill: #111; }
.float { width: 199px; }
.none { width: 200px; margin-right: 16px; }

/* graph canvas */
.canvas { position: relative; height: 1836px; flex: none; background: #202020; overflow: hidden; }
.edges { position: absolute; left: 0; top: 0; width: 3360px; height: 1836px; }

.c { --k: #96e2e5; }
.p { --k: #f2caf0; }
.y { --k: #f8fda2; }
.port {
  width: 16px;
  height: 16px;
  flex: none;
  border: 2px solid var(--k);
  border-radius: 50%;
  background: #202020;
}
.port.on { background: radial-gradient(circle, var(--k) 3.800px, #202020 4.600px); }

.slot {
  position: absolute;
  display: flex;
  align-items: center;
  height: 42px;
  margin: -2px 0 0 -2px;
  padding: 0 11px 0 20px;
  border: 2px solid rgba(30, 30, 30, .8);
  border-radius: 3px;
  background: rgba(63, 63, 63, .8);
  background-clip: padding-box;
  font-size: 22px;
  line-height: 38px;
  white-space: nowrap;
}
.slot b { width: 28px; }
.slot em {
  width: 60px;
  height: 34px;
  padding-left: 4px;
  border: 2px solid #333;
  border-top-color: #1f1f1f;
  background: #414141;
  line-height: 31px;
  color: #d2d2d2;
}
.vec b { width: 22px; }
.vec b.w { width: 26px; }
.vec em + b { margin-left: 12px; }
.slot u { position: relative; top: -3px; color: #d0d0d0; }
.object { width: 200px; }
.tangent { width: 216px; }
.dot {
  width: 18px;
  height: 18px;
  flex: none;
  margin-left: 19px;
  border-radius: 50%;
  background: radial-gradient(circle, var(--k) 4px, #202020 4.800px);
}
.slot u + .dot { margin-left: auto; }

.node {
  position: absolute;
  border: 2px solid rgba(24, 24, 24, .85);
  margin: -2px 0 0 -2px;
  border-radius: 13px;
  font-size: 22px;
}
.node h2 {
  height: 72px;
  padding-left: 16px;
  line-height: 72px;
  font-size: 24px;
  background: rgba(63, 63, 63, .8);
  border-radius: 11px 11px 0 0;
}
.ports { display: flex; border-top: 2px solid rgba(32, 32, 32, .9); }
.ports > div { padding: 8px 0; }
.ports p { height: 48px; display: flex; align-items: center; gap: 16px; line-height: 44px; padding-top: 4px; letter-spacing: -.07px; }
.ports .port { margin-top: -4px; }
.in { flex: none; padding-left: 16px !important; background: rgba(63, 63, 63, .8); }
.out { flex: 1; background: rgba(46, 46, 46, .8); }
.in + .out { border-left: 2px solid #232323; }
.out p { justify-content: flex-end; padding-right: 16px; }
.foot {
  height: 34px;
  border-top: 2px solid rgba(32, 32, 32, .9);
  border-radius: 0 0 11px 11px;
  background: rgba(63, 63, 63, .8);
  background-clip: padding-box;
  display: flex;
  justify-content: center;
  align-items: center;
}
.foot svg { width: 22px; height: 14px; margin-left: 1px; }
.node > .ports:last-child > :first-child { border-bottom-left-radius: 11px; }
.node > .ports:last-child > :last-child { border-bottom-right-radius: 11px; }
.preview { height: 402px; border-top: 2px solid #222; border-radius: 0 0 11px 11px; }
.ramp { background: linear-gradient(#000 50%, #2c2c2c 52%, #4a4a4a 57%, #707070 66%, #949494 81%, #bcbcbc); }
.white { background: linear-gradient(#efefef, #fff 32%, #fff 62%, #f8f8f8 84%, #efefef); }

.time { left: 448px; top: 203px; width: 224px; }
.multiply { left: 782px; top: 207px; width: 234px; }
.multiply .in { width: 104px; }
.position { left: 254px; top: 863px; width: 384px; }
.split { left: 776px; top: 855px; width: 220px; }
.split .in { width: 108px; }
.subtract { left: 1074px; top: 487px; width: 404px; }
.subtract .in { width: 188px; }
.cosine { left: 1512px; top: 487px; width: 404px; }
.cosine .in { width: 192px; }
.clamp { left: 1930px; top: 971px; width: 404px; }
.clamp .in { width: 204px; }
.lerp { width: 234px; }
.lerp .in { width: 104px; }
.lerp-a { left: 2318px; top: 179px; }
.lerp-b { left: 2378px; top: 769px; }
.selected { outline: 2px solid #5fb8f8; outline-offset: 2px; }
.master { left: 2790px; top: 385px; width: 388px; }
.master .in { flex: 1; }

.control {
  height: 74px;
  display: flex;
  align-items: center;
  justify-content: space-between;
  padding: 0 18px 2px 20px;
  border-top: 2px solid rgba(32, 32, 32, .9);
  background: rgba(63, 63, 63, .8);
  background-clip: padding-box;
}
.dselect {
  width: 140px;
  height: 34px;
  display: flex;
  align-items: center;
  justify-content: space-between;
  padding: 0 10px 1px 9px;
  border-radius: 5px;
  border-top: 2px solid #777;
  background: linear-gradient(#5b5b5b, #404040);
  box-shadow: 0 2px 1px #2a2a2a;
  color: #d4d4d4;
}
.dselect svg { width: 10px; height: 20px; fill: #9a9a9a; }

.pill-node {
  position: absolute;
  height: 56px;
  margin: -2px 0 0 -2px;
  display: flex;
  align-items: center;
  border: 2px solid #191919;
  border-radius: 28px;
  padding-left: 17px;
  background: linear-gradient(#575757, #484848);
  font-size: 22px;
}
.bead { width: 10px; height: 10px; flex: none; border-radius: 50%; background: #a6e873; }
.pill-node span { margin-left: 12px; flex: 1; line-height: 52px; padding-top: 2px; }
.objcolor { left: 2044px; top: 433px; width: 258px; padding-right: 32px; }
.hicolor { left: 1994px; top: 623px; width: 272px; padding-right: 32px; }
.hicolor span { margin-left: 11px; }

/* blackboard */
.blackboard {
  position: absolute;
  left: 2px;
  top: 2px;
  width: 400px;
  height: 800px;
  border: 2px solid #191919;
  border-radius: 12px;
  overflow: hidden;
  display: flex;
  flex-direction: column;
  background: #2b2b2b;
  font-size: 22px;
}
.bb-head {
  height: 102px;
  flex: none;
  display: flex;
  justify-content: space-between;
  padding: 0 22px 0 14px;
  border-bottom: 2px solid #212121;
  background: #393939;
}
.bb-head h1 { font-size: 28px; line-height: 32px; margin-top: 16px; }
.bb-head h3 { font-size: 22px; line-height: 26px; margin-top: 15px; color: #606060; }
.plus { width: 20px; height: 20px; margin-top: 47px; }
.prop { height: 294px; flex: none; }
.prop-title { height: 53px; padding-top: 1px; display: flex; align-items: center; padding-left: 11px; }
.prop-title svg { width: 18px; height: 12px; margin: 3px 9px 0 0; }
.pill {
  display: flex;
  align-items: center;
  height: 40px;
  padding: 0 17px 0 17px;
  border: 2px solid #191919;
  border-radius: 20px;
  background: linear-gradient(#575757, #484848);
  font-size: 24px;
}
.pill .bead { margin-right: 9px; }
.row { height: 48px; display: flex; align-items: center; padding-left: 41px; white-space: nowrap; }
.row label { width: 105px; flex: none; }
.row > label + * { flex: none; }
.check {
  width: 24px;
  height: 24px;
  border-radius: 4px;
  border-top: 2px solid #808080;
  background: linear-gradient(#5c5c5c, #404040);
}
.check svg { width: 26px; height: 22px; display: block; }
.textfield {
  width: 300px;
  height: 34px;
  margin-left: 8px;
  padding-left: 4px;
  border: 2px solid #242424;
  background: #3e3e3e;
  font: 700 24px/28px "Liberation Sans", sans-serif;
  color: #d6d6d6;
}
.bselect {
  width: 300px;
  height: 31px;
  padding-left: 9px;
  border-top: 2px solid #808080;
  border-radius: 5px;
  background: linear-gradient(#5a5a5a, #404040);
  line-height: 26px;
  color: #d0d0d0;
}
.swatch {
  width: 300px;
  height: 32px;
  margin-left: -2px;
  padding-left: 180px;
  border-bottom: 6px solid #000;
  border-left: 2px solid #777;
  font: 18.500px/26px "Open Sans", sans-serif;
  color: #868675;
}
.yellow { border-top: 2px solid #84842c; border-left-color: #84842c; background: linear-gradient(90deg, #dcdc46, #fdfd50 45%); }
.pale { border-top: 2px solid #888; background: linear-gradient(90deg, #dcdcdc, #fff 45%); color: #858585; }
.hscroll {
  position: relative;
  height: 30px;
  margin-top: auto;
  display: flex;
  align-items: center;
  padding: 0 10px;
  border-top: 2px solid #232323;
  background: linear-gradient(#3c3c3c, #2a2a2a);
}
.hscroll svg { width: 10px; height: 12px; }
.track { width: 334px; height: 28px; margin: 0 12px; border-radius: 14px; background: #2d2d2d; box-shadow: inset -3px 0 3px #202020; }
.thumb { width: 222px; height: 27px; border-radius: 14px; border: 1px solid #232323; background: linear-gradient(#545454, #404040); }
.grip { position: absolute; right: 0; bottom: 0; width: 20px; height: 5px; background: #8a8a8a; }

.main-preview {
  position: absolute;
  left: 2978px;
  top: 1386px;
  width: 380px;
  height: 450px;
  border: 2px solid #191919;
  border-radius: 12px;
  overflow: hidden;
  background: #464646;
}
.main-preview h2 { height: 70px; padding-left: 20px; font-size: 24px; line-height: 66px; background: #393939; }

/* desktop and dock */
.desktop {
  flex: 1;
  display: flex;
  padding-left: 230px;
  background:
    radial-gradient(circle at 60px 90px, rgba(125, 122, 126, .7), transparent 60px),
    radial-gradient(circle at 130px 20px, rgba(216, 212, 220, .7), transparent 90px),
    radial-gradient(circle at 215px 5px, rgba(90, 88, 94, .8), transparent 60px),
    radial-gradient(circle at 30px 10px, rgba(205, 200, 210, .8), transparent 70px),
    radial-gradient(circle at 3220px 100px, rgba(167, 156, 159, .9), transparent 80px),
    radial-gradient(circle at 3330px 40px, rgba(165, 165, 185, .9), transparent 90px),
    linear-gradient(90deg, #b0aeb0, #a5a2a8 50%, #8b899a);
}
.dock {
  width: 2900px;
  display: flex;
  padding-left: 6px;
  border: 2px solid #a19fa5;
  border-bottom: 0;
  border-radius: 12px 12px 0 0;
  background: linear-gradient(90deg, #9a999f, #858188 12%, #96939c 25%, #8a8790 38%, #8d888e 50%, #7d7882 60%, #858088 72%, #857a80 84%, #96939e 92%, #8a868e);
}
.dock > svg { width: 118px; height: 142px; margin-top: -2px; flex: none; overflow: visible; }
.sep { width: 2px; height: 106px; margin: 16px 22px 0 26px; background: #d3d1d6; }
.cal-m, .cal-d, .tv, .ps, .ff, .ff2 { text-anchor: middle; }
.cal-m { font: 16px Inter, sans-serif; fill: #fff; }
.cal-d { font: 300 47px Inter, sans-serif; fill: #222; letter-spacing: -2px; }
.tv { font: 500 35px Inter, sans-serif; fill: #fff; text-anchor: start; }
.ps { font: 600 58px "Open Sans", sans-serif; fill: #5fcdf8; letter-spacing: -2px; }
.ff { font: 9px "Liberation Serif", serif; fill: #222; }
.ff2 { font: 5px "Liberation Serif", serif; fill: #333; }
```
